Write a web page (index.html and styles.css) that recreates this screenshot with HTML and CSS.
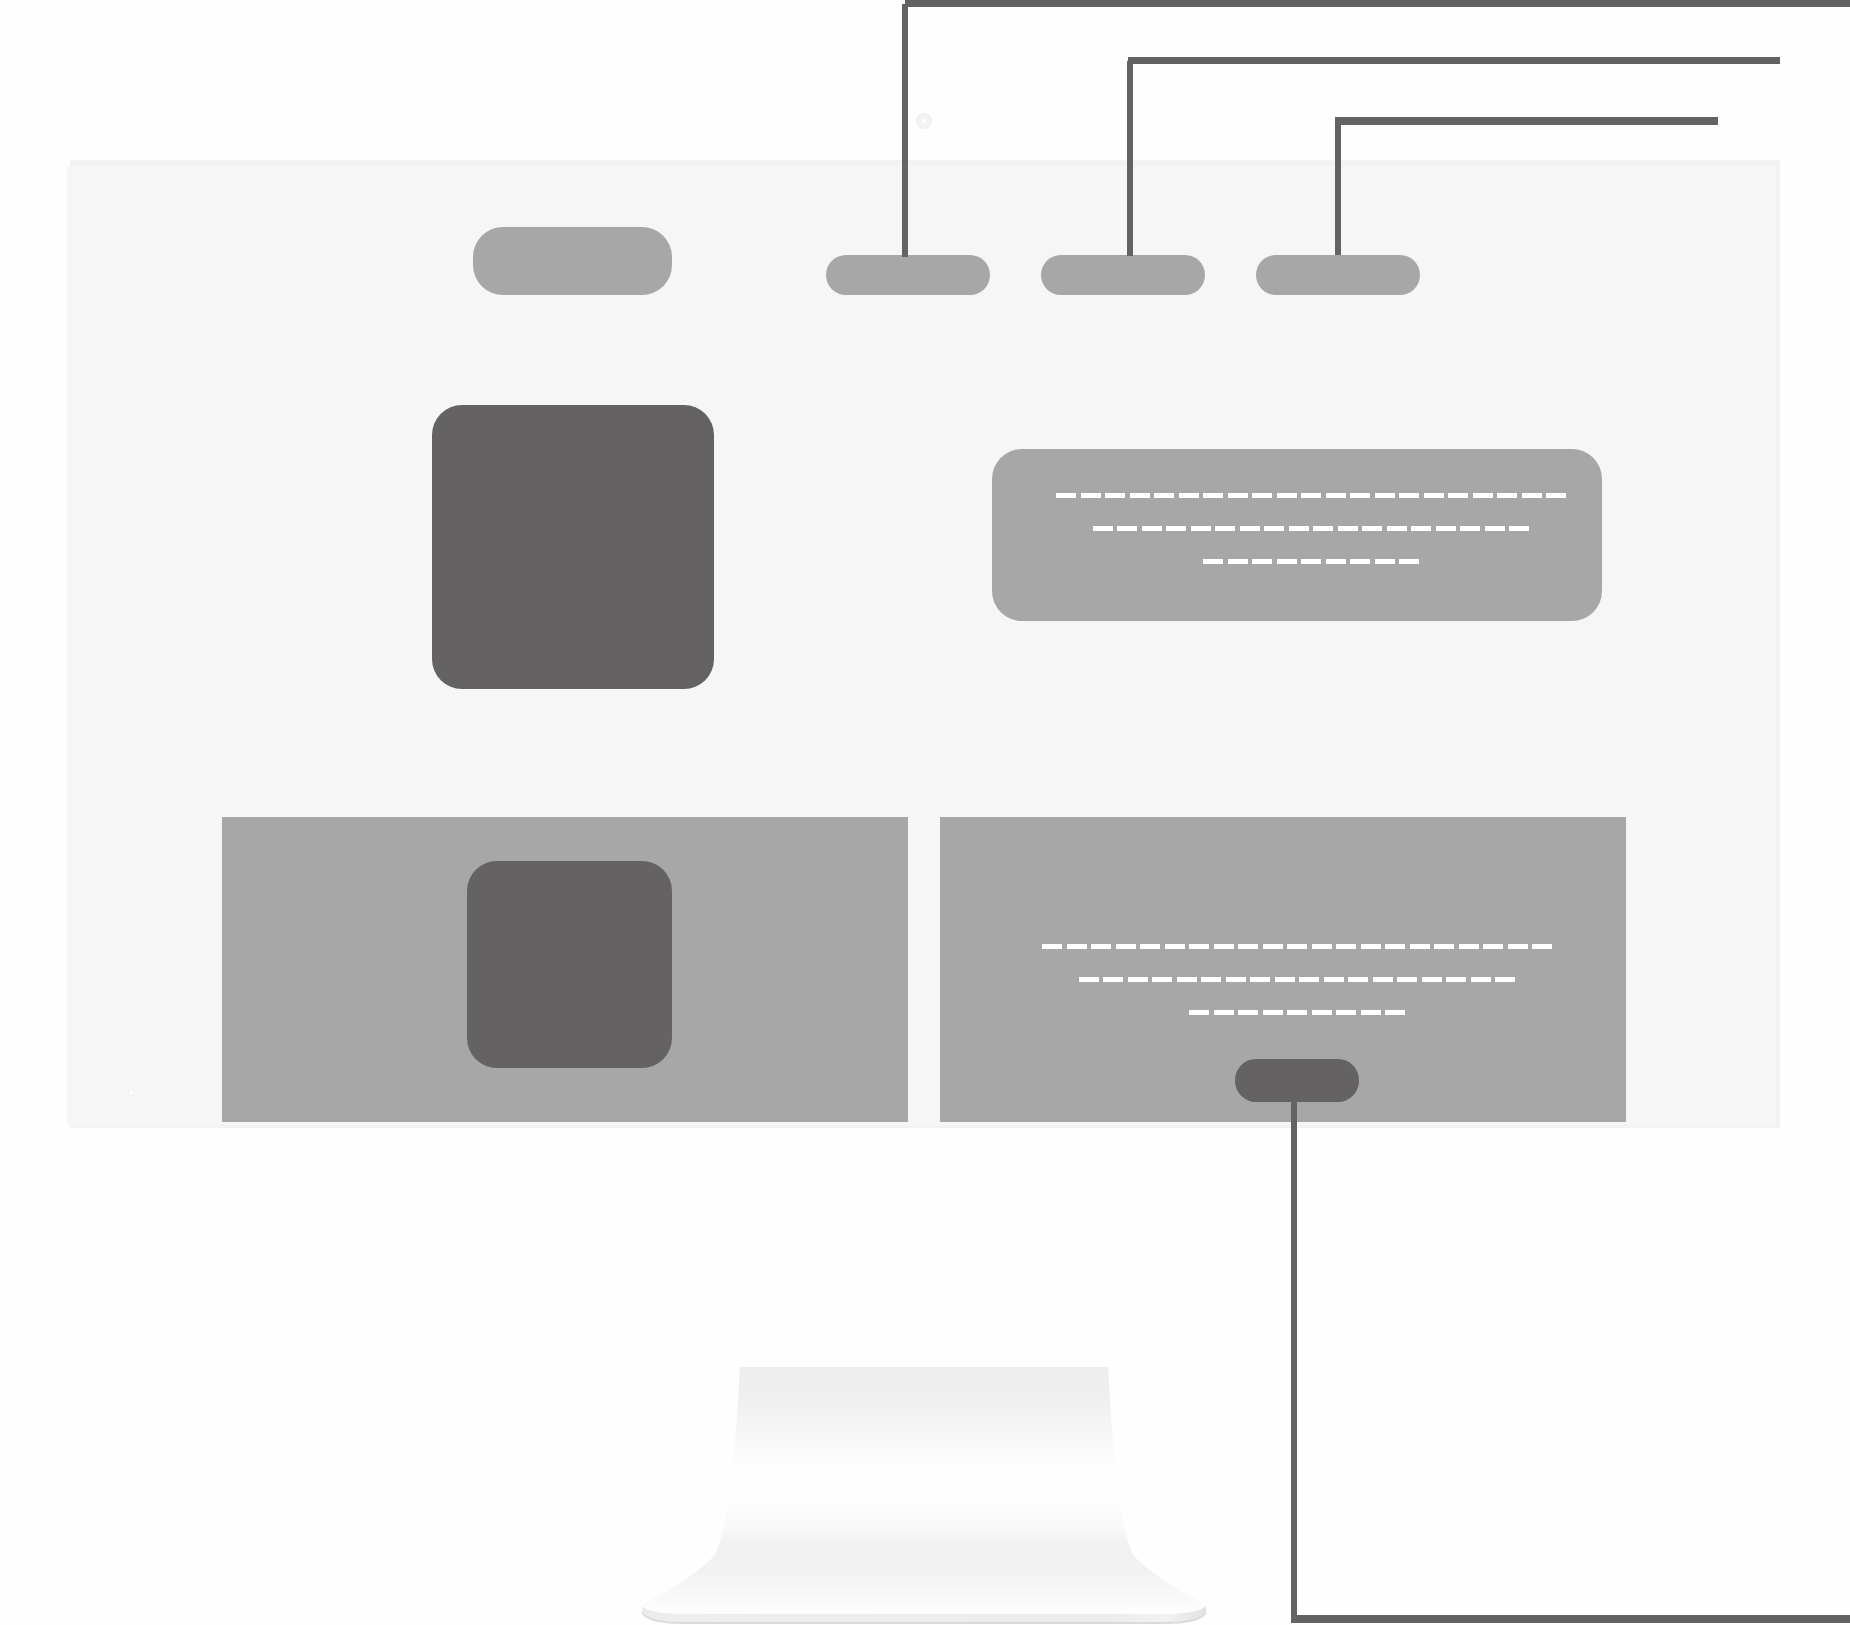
FILE: index.html
```
<!DOCTYPE html>
<html lang="en">
<head>
<meta charset="utf-8">
<meta name="viewport" content="width=device-width, initial-scale=1">
<title>Desktop wireframe</title>
<link rel="stylesheet" href="styles.css">
</head>
<body>
<main class="page">
  <svg class="camera" viewBox="0 0 16 16" aria-hidden="true">
    <circle cx="8" cy="8" r="8" fill="#f0f0f0"/>
    <circle cx="8" cy="8" r="6" fill="#f4f4f4"/>
    <circle cx="8" cy="8" r="2" fill="#fff"/>
  </svg>

  <div class="monitor">
    <div class="screen">
      <div class="content">
        <header class="header">
          <a class="logo" href="#" aria-label="Home"></a>
          <nav class="nav" aria-label="Main">
            <a class="pill" href="#" aria-label="First section"><span class="wire wire-first"></span></a>
            <a class="pill" href="#" aria-label="Second section"><span class="wire wire-second"></span></a>
            <a class="pill" href="#" aria-label="Third section"><span class="wire wire-third"></span></a>
          </nav>
        </header>

        <section class="columns hero">
          <div class="hero-media"><div class="block block-large"></div></div>
          <div class="hero-copy">
            <div class="bubble">
              <div class="lines">
                <div class="line line-long"><i></i><i></i><i></i><i></i><i></i><i></i><i></i><i></i><i></i><i></i><i></i><i></i><i></i><i></i><i></i><i></i><i></i><i></i><i></i><i></i><i></i></div>
                <div class="line line-medium"><i></i><i></i><i></i><i></i><i></i><i></i><i></i><i></i><i></i><i></i><i></i><i></i><i></i><i></i><i></i><i></i><i></i><i></i></div>
                <div class="line line-short"><i></i><i></i><i></i><i></i><i></i><i></i><i></i><i></i><i></i></div>
              </div>
            </div>
          </div>
        </section>

        <section class="columns">
          <article class="card card-media"><div class="block block-small"></div></article>
          <article class="card card-copy">
            <div class="lines">
              <div class="line line-long"><i></i><i></i><i></i><i></i><i></i><i></i><i></i><i></i><i></i><i></i><i></i><i></i><i></i><i></i><i></i><i></i><i></i><i></i><i></i><i></i><i></i></div>
              <div class="line line-medium"><i></i><i></i><i></i><i></i><i></i><i></i><i></i><i></i><i></i><i></i><i></i><i></i><i></i><i></i><i></i><i></i><i></i><i></i></div>
              <div class="line line-short"><i></i><i></i><i></i><i></i><i></i><i></i><i></i><i></i><i></i></div>
            </div>
            <button class="action" type="button" aria-label="Continue"><span class="wire-down"></span></button>
          </article>
        </section>
      </div>
      <span class="dot"></span>
    </div>
  </div>

  <svg class="stand" viewBox="0 0 568 258" aria-hidden="true">
    <defs>
      <linearGradient id="neck" x1="0" y1="0" x2="0" y2="1">
        <stop offset="0" stop-color="#eeeeee"/>
        <stop offset="0.11" stop-color="#efefef"/>
        <stop offset="0.25" stop-color="#f5f5f5"/>
        <stop offset="0.41" stop-color="#fefefe"/>
        <stop offset="0.52" stop-color="#fefefe"/>
        <stop offset="0.65" stop-color="#f8f8f8"/>
        <stop offset="0.72" stop-color="#f1f1f1"/>
        <stop offset="0.83" stop-color="#f2f2f2"/>
        <stop offset="1" stop-color="#fefefe"/>
      </linearGradient>
      <linearGradient id="lip" x1="0" y1="0" x2="1" y2="0">
        <stop offset="0" stop-color="#eaeaea"/>
        <stop offset="0.06" stop-color="#eeeeee"/>
        <stop offset="0.83" stop-color="#ececec"/>
        <stop offset="0.93" stop-color="#f2f2f2"/>
        <stop offset="1" stop-color="#e2e2e2"/>
      </linearGradient>
    </defs>
    <path d="M2 240V247Q8 257 46 257H522Q560 257 566 247V240Z" fill="#dadada"/>
    <path d="M2 240V245Q8 255 46 255H522Q560 255 566 245V240L560 236H8Z" fill="url(#lip)"/>
    <path d="M100 0H468Q471 58 476 103C480 138 484 162 489 178Q492 187 496 191C512 207 536 222 556 232C564 236 566 239 565 240Q556 247 522 247H46Q12 247 3 240C2 239 4 236 12 232C32 222 56 207 72 191Q76 187 79 178C84 162 88 138 92 103Q97 58 100 0Z" fill="url(#neck)"/>
  </svg>
</main>
</body>
</html>
```
FILE: styles.css
```
:root {
  --dark: #646263;
  --mid: #a7a7a7;
  --panel: #f6f6f6;
  --bezel: #f2f2f2;
}

*,
*::before,
*::after {
  box-sizing: border-box;
}

body {
  margin: 0;
  background: #fefefe;
  font-family: "Liberation Sans", Arial, sans-serif;
}

.page {
  display: flex;
  flex-direction: column;
  padding: 113px 70px 0 68px;
  overflow: hidden;
}

.camera {
  align-self: center;
  width: 16px;
  height: 16px;
  margin-bottom: 31px;
}

/* Monitor and its screen */
.monitor {
  margin-left: 2px;
  padding: 6px 4px 3px 0;
  background: var(--bezel);
}

.screen {
  position: relative;
  margin-left: -3px;
  padding: 61px 0 3px 5px;
  background: var(--panel);
}

.content {
  max-width: 1404px;
  margin: 0 auto;
}

.dot {
  position: absolute;
  left: 61px;
  bottom: 29px;
  width: 6px;
  height: 6px;
  border: 1px solid #f1f1f1;
  border-radius: 50%;
  background: #fff;
}

/* Header */
.header {
  display: flex;
  align-items: flex-end;
  gap: 154px;
  padding-left: 251px;
}

.logo {
  width: 199px;
  height: 68px;
  border-radius: 30px;
  background: var(--mid);
}

.nav {
  display: flex;
  gap: 51px;
}

.pill {
  position: relative;
  width: 164px;
  height: 40px;
  border-radius: 20px;
  background: var(--mid);
}

/* Callout wires that rise from the pills and turn right */
.wire {
  position: absolute;
  bottom: 100%;
}

.wire::before,
.wire::after {
  content: "";
  position: absolute;
  background: var(--dark);
}

/* horizontal run */
.wire::before {
  top: 0;
  right: 0;
  left: 0;
  height: 7px;
}

/* vertical run */
.wire::after {
  top: 4px;
  bottom: 0;
  left: 0;
  width: 6px;
}

.wire-first {
  left: 76px;
  bottom: 38px;
  width: 100vw;
  height: 257px;
}

.wire-first::before {
  left: 3px;
}

.wire-second {
  left: 86px;
  bottom: 39px;
  width: 653px;
  height: 199px;
}

.wire-second::before {
  left: 1px;
}

.wire-third {
  left: 79px;
  width: 383px;
  height: 138px;
}

.wire-third::before {
  height: 8px;
}

/* Two-column rows */
.columns {
  display: grid;
  grid-template-columns: 1fr 1fr;
  gap: 32px;
}

.hero {
  padding: 110px 0 128px;
}

.hero-media,
.hero-copy {
  display: flex;
  justify-content: center;
  align-items: flex-start;
}

.hero-media {
  padding-left: 16px;
}

.hero-copy {
  padding: 44px 0 0 28px;
}

.block {
  border-radius: 30px;
  background: var(--dark);
}

.block-large {
  width: 282px;
  height: 284px;
}

.block-small {
  width: 205px;
  height: 207px;
}

.bubble {
  width: 610px;
  padding: 44px 0 57px 28px;
  border-radius: 30px;
  background: var(--mid);
}

/* Dashed copy */
.lines {
  display: flex;
  flex-direction: column;
  align-items: center;
  gap: 28px;
}

.line {
  display: flex;
  justify-content: space-between;
}

.line i {
  width: 20px;
  height: 5px;
  background: #fff;
}

.line-long {
  width: 510px;
}

.line-medium {
  width: 436px;
}

.line-short {
  width: 216px;
}

/* Cards */
.card {
  display: flex;
  flex-direction: column;
  align-items: center;
  min-height: 305px;
  background: var(--mid);
}

.card-media {
  padding: 44px 0 0 8px;
}

.card-copy {
  gap: 44px;
  padding: 127px 0 20px 28px;
}

.action {
  position: relative;
  width: 124px;
  height: 43px;
  padding: 0;
  border: 0;
  border-radius: 21px;
  background: var(--dark);
}

/* Callout wire that drops from the button and turns right */
.wire-down {
  position: absolute;
  top: 100%;
  left: 56px;
  width: 100vw;
  height: 521px;
  border: solid var(--dark);
  border-width: 0 0 8px 6px;
}

.stand {
  align-self: center;
  width: 568px;
  height: 258px;
  margin-top: 239px;
}
```
